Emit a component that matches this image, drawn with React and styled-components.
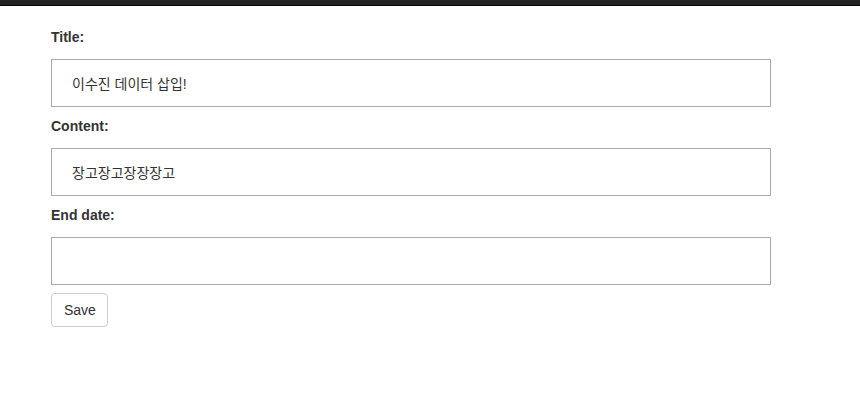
import React from "react";
import styled, { createGlobalStyle } from "styled-components";

const GlobalStyle = createGlobalStyle`
  html, body {
    margin: 0;
    padding: 0;
    background: #ffffff;
    font-family: "Liberation Sans", Arial, "Noto Sans CJK KR", sans-serif;
    font-size: 14px;
    color: #333333;
  }
`;

const StyledTopBar = styled.div`
  height: 5px;
  background-color: #222222;
  border-bottom: 1px solid #080808;
`;

const StyledForm = styled.form`
  padding: 21px 0 0 51px;
  width: 720px;
`;

const StyledLabel = styled.label`
  display: block;
  font-weight: bold;
  line-height: 20px;
  margin-bottom: 12px;
`;

const StyledInput = styled.input`
  display: block;
  box-sizing: border-box;
  width: 100%;
  height: 48px;
  margin: 0 0 ${(p) => (p.$last ? "8px" : "9px")};
  padding: 0 20px;
  border: 1px solid #aaaaaa;
  border-radius: 0;
  font-family: "Liberation Sans", Arial, "Noto Sans CJK KR", sans-serif;
  font-size: 14px;
  color: #333333;
  background: #ffffff;
  outline: none;
`;

const StyledButton = styled.button`
  box-sizing: border-box;
  height: 34px;
  padding: 0 11px 0 12px;
  border: 1px solid #cccccc;
  border-radius: 4px;
  background: #ffffff;
  font-family: "Liberation Sans", Arial, sans-serif;
  font-size: 14px;
  color: #333333;
  cursor: pointer;
`;

const fields = [
  { id: "title", label: "Title:", value: "이수진 데이터 삽입!" },
  { id: "content", label: "Content:", value: "장고장고장장장고" },
  { id: "endDate", label: "End date:", value: "" },
];

export default function App() {
  return (
    <div>
      <GlobalStyle />
      <StyledTopBar />
      <StyledForm onSubmit={(e) => e.preventDefault()}>
        {fields.map((f, i) => (
          <div key={f.id}>
            <StyledLabel htmlFor={f.id}>{f.label}</StyledLabel>
            <StyledInput
              id={f.id}
              type="text"
              defaultValue={f.value}
              $last={i === fields.length - 1}
            />
          </div>
        ))}
        <StyledButton type="submit">Save</StyledButton>
      </StyledForm>
    </div>
  );
}
